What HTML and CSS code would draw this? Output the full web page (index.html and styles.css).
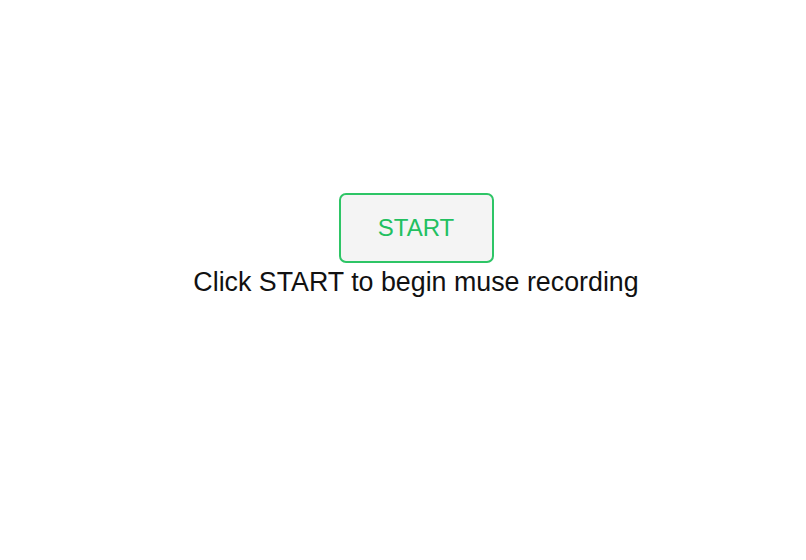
FILE: index.html
```html
<!DOCTYPE html>
<html>
<head>
<meta charset="utf-8">
<link rel="stylesheet" href="styles.css">
</head>
<body>
<div class="app">
  <button class="start-btn">START</button>
  <p class="hint">Click START to begin muse recording</p>
</div>
</body>
</html>
```
FILE: styles.css
```css
html, body {
  margin: 0;
  padding: 0;
  background: #ffffff;
}
.app {
  display: flex;
  flex-direction: column;
  align-items: center;
  padding-top: 193px;
  padding-left: 26px;
  font-family: "Liberation Sans", Arial, sans-serif;
}
.start-btn {
  box-sizing: border-box;
  width: 155px;
  height: 70px;
  border: 2px solid #2ec566;
  border-radius: 7px;
  background: #f4f4f4;
  color: #22c060;
  font-family: "Liberation Sans", Arial, sans-serif;
  font-size: 24px;
  padding: 0;
  cursor: pointer;
}
.hint {
  margin: 4px 0 0;
  font-size: 26.8px;
  color: #111111;
}
```
